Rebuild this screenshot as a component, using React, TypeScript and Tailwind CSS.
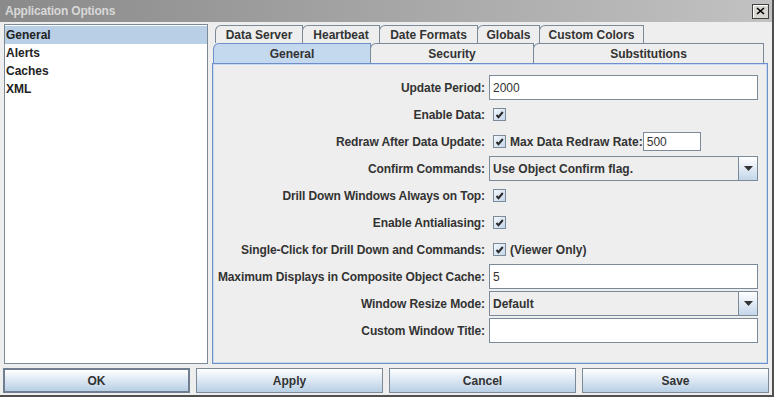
const FONT = "font-['Liberation_Sans',Arial,sans-serif]";

const LIST_ITEMS = ["General", "Alerts", "Caches", "XML"];

const TOP_TABS = [
  { label: "Data Server", w: "w-[88px]" },
  { label: "Heartbeat", w: "w-[78px]" },
  { label: "Date Formats", w: "w-[99px]" },
  { label: "Globals", w: "w-[63px]" },
  { label: "Custom Colors", w: "w-[105px]" },
];

const SUB_TABS = [
  { label: "General", w: "w-[158px]", active: true },
  { label: "Security", w: "w-[164px]", active: false },
  { label: "Substitutions", w: "w-[231px]", active: false },
];

function Check() {
  return (
    <span className="ml-[4px] flex h-[13px] w-[13px] items-center justify-center border border-[#7a8a99] bg-gradient-to-br from-[#f4f8fc] to-[#c4d6ea]">
      <svg viewBox="0 0 9 9" className="h-[9px] w-[9px]">
        <path d="M1.5 5l2 2.2L7.8 2" stroke="#2a2a2a" strokeWidth="2" fill="none" />
      </svg>
    </span>
  );
}

function TextField({ value, className = "" }: { value?: string; className?: string }) {
  return (
    <div className={`flex items-center border border-[#7a8a99] bg-white pl-[3px] font-normal ${className}`}>
      {value}
    </div>
  );
}

function Combo({ value }: { value: string }) {
  return (
    <div className="flex h-[25px] w-[269px] border border-[#7a8a99] bg-[#eeeeee]">
      <div className="flex flex-1 items-center border-r border-[#7a8a99] pl-[3px]">{value}</div>
      <div className="flex w-[18px] items-center justify-center bg-gradient-to-b from-white to-[#c4d6ea]">
        <svg viewBox="0 0 9 5" className="h-[5px] w-[9px]">
          <path d="M0 0h9l-4.5 5z" fill="#333" />
        </svg>
      </div>
    </div>
  );
}

function Row({ label, children }: { label: string; children: React.ReactNode }) {
  return (
    <div className="flex h-[25px] items-center">
      <div className="w-[276px] shrink-0 whitespace-nowrap pr-[4px] text-right tracking-[-0.1px]">{label}</div>
      {children}
    </div>
  );
}

export default function App() {
  return (
    <div className={`${FONT} flex h-[397px] w-[774px] flex-col border-b-2 border-r-2 border-[#505050] bg-[#eeeeee] text-[12px] font-bold text-[#333333]`}>
      {/* Title bar */}
      <div className="flex h-[22px] shrink-0 items-center justify-between bg-gradient-to-r from-[#8a8a8a] to-[#c2c2c2] pl-[5px] pr-[3px]">
        <span className="text-[12px] tracking-[-0.2px] text-[#d8d8d8]">Application Options</span>
        <button className="flex h-[15px] w-[17px] items-center justify-center border border-[#404040] bg-[#d8d6d0] shadow-[inset_1px_1px_0_#fff]">
          <svg viewBox="0 0 9 8" className="h-[8px] w-[9px]">
            <path d="M1 1l7 6M8 1l-7 6" stroke="#000" strokeWidth="1.6" />
          </svg>
        </button>
      </div>

      {/* Body */}
      <div className="flex h-[342px] gap-[4px] pl-[4px] pt-[2px]">
        {/* Left list */}
        <div className="h-[340px] w-[204px] border border-[#7a8a99] bg-white pt-[1px]">
          {LIST_ITEMS.map((item, i) => (
            <div
              key={item}
              className={`flex h-[18px] items-center pl-[1px] text-[12px] text-[#222] ${i === 0 ? "bg-[#b8cfe5]" : ""}`}
            >
              {item}
            </div>
          ))}
        </div>

        {/* Tabs */}
        <div className="flex w-[556px] flex-col">
          <div className="mt-[1px] flex h-[18px] pl-[3px]">
            {TOP_TABS.map((t) => (
              <div
                key={t.label}
                className={`flex ${t.w} items-center justify-center rounded-tl-[6px] border-l border-r border-t border-[#7a8a99] bg-[#eeeeee] -mr-px`}
              >
                {t.label}
              </div>
            ))}
          </div>
          <div className="flex h-[20px] pl-[1px]">
            {SUB_TABS.map((t) => (
              <div
                key={t.label}
                className={`flex ${t.w} items-center justify-center rounded-tl-[6px] border-l border-r border-t -mr-px ${
                  t.active ? "border-[#6f8fca] bg-[#c4d8ee]" : "border-[#7a8a99] bg-[#eeeeee]"
                }`}
              >
                {t.label}
              </div>
            ))}
          </div>

          {/* Panel */}
          <div className="flex h-[301px] flex-col gap-[2px] border border-[#6f8fca] bg-[#eeeeee] pt-[11px] shadow-[inset_0_0_0_1px_#c8daf0]">
            <Row label="Update Period:">
              <TextField value="2000" className="h-[25px] w-[269px]" />
            </Row>
            <Row label="Enable Data:">
              <Check />
            </Row>
            <Row label="Redraw After Data Update:">
              <Check />
              <span className="ml-[4px]">Max Data Redraw Rate:</span>
              <TextField value="500" className="h-[19px] w-[58px]" />
            </Row>
            <Row label="Confirm Commands:">
              <Combo value="Use Object Confirm flag." />
            </Row>
            <Row label="Drill Down Windows Always on Top:">
              <Check />
            </Row>
            <Row label="Enable Antialiasing:">
              <Check />
            </Row>
            <Row label="Single-Click for Drill Down and Commands:">
              <Check />
              <span className="ml-[4px]">(Viewer Only)</span>
            </Row>
            <Row label="Maximum Displays in Composite Object Cache:">
              <TextField value="5" className="h-[25px] w-[269px]" />
            </Row>
            <Row label="Window Resize Mode:">
              <Combo value="Default" />
            </Row>
            <Row label="Custom Window Title:">
              <TextField className="h-[25px] w-[269px]" />
            </Row>
          </div>
        </div>
      </div>

      {/* Buttons */}
      <div className="mt-[4px] flex gap-[6px] pl-[3px]">
        {["OK", "Apply", "Cancel", "Save"].map((b, i) => (
          <button
            key={b}
            className={`flex h-[25px] w-[187px] items-center justify-center bg-gradient-to-b from-white to-[#b8cfe5] text-[12px] font-bold text-[#333] ${
              i === 0 ? "border-2 border-[#6f7f8f]" : "border border-[#7a8a99]"
            }`}
          >
            {b}
          </button>
        ))}
      </div>
    </div>
  );
}
